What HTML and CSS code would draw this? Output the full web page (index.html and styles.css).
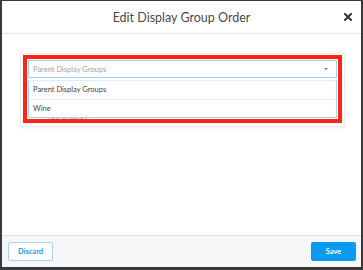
FILE: index.html
```html
<!DOCTYPE html>
<html lang="en">
<head>
  <meta charset="UTF-8" />
  <meta name="viewport" content="width=device-width, initial-scale=1.0"/>
  <title>Edit Display Group Order</title>
  <link rel="stylesheet" href="styles.css">
</head>
<body>
  <div class="modal">
    <div class="modal-header">
      <span></span>
      <h1 class="modal-title">Edit Display Group Order</h1>
      <button class="btn-close" aria-label="Close">
        <svg width="8" height="8" viewBox="0 0 8 8"><path d="M1 1 L7 7 M7 1 L1 7" stroke="#333" stroke-width="2" stroke-linecap="square"/></svg>
      </button>
    </div>

    <div class="modal-body">
      <div class="card">
        <span class="hidden-row">Top Display</span>
        <div class="highlight">
          <div class="select">
            <span class="placeholder">Parent Display Groups</span>
            <span class="caret"></span>
          </div>
          <ul class="menu">
            <li>Parent Display Groups</li>
            <li>Wine</li>
          </ul>
        </div>
      </div>
    </div>

    <div class="modal-footer">
      <button class="btn-outline">Discard</button>
      <button class="btn-azul">Save</button>
    </div>
  </div>
</body>
</html>
```

FILE: styles.css
```css
* { box-sizing: border-box; }

body {
  margin: 0;
  font-family: 'Lato', 'Open Sans', sans-serif;
  background: #3a3a3a;
  height: 270px;
  padding: 1px 2px 3px 2px;
}

.modal {
  background: #fff;
  height: 266px;
  display: flex;
  flex-direction: column;
}

.modal-header {
  height: 33px;
  border-bottom: 1px solid #e6e6e6;
  display: grid;
  grid-template-columns: 1fr auto 1fr;
  align-items: center;
}

.modal-title {
  margin: 0;
  font-size: 12.5px;
  font-weight: 400;
  color: #4a4a4a;
}

.btn-close {
  justify-self: end;
  margin-right: 9px;
  border: none;
  background: none;
  padding: 0;
  display: flex;
  cursor: pointer;
}

.modal-body {
  flex: 1;
  padding: 19px 16px 0 18px;
}

.card {
  position: relative;
  border: 1px solid #ececec;
  box-shadow: 0 1px 3px rgba(0, 0, 0, 0.06);
  height: 74px;
  padding: 1px 2px;
}

.highlight {
  position: relative;
  border: 4px solid #ff2515;
  padding: 1px;
}

.select {
  height: 18px;
  border: 1px solid #9fd2f3;
  background: #fff;
  display: flex;
  align-items: center;
  justify-content: space-between;
  padding: 0 8px 0 4px;
}

.placeholder {
  font-size: 7.5px;
  color: #a4a4a4;
}

.caret {
  width: 0;
  height: 0;
  border-left: 2px solid transparent;
  border-right: 2px solid transparent;
  border-top: 2px solid #2a8fd6;
}

.menu {
  list-style: none;
  margin: 2px 0 0 0;
  padding: 0;
  background: #fff;
  border: 1px solid #9fd2f3;
  border-top-color: #dfeef9;
}

.menu li {
  height: 18px;
  line-height: 18px;
  padding: 0 4px;
  font-size: 7.5px;
  color: #444;
}

.menu li + li {
  border-top: 1px solid #ececec;
}

.hidden-row {
  position: absolute;
  left: 26px;
  top: 57px;
  font-size: 8px;
  color: #9aa8b2;
}

.modal-footer {
  height: 32px;
  border-top: 1px solid #e2e2e2;
  background: #f6f7f9;
  display: flex;
  justify-content: space-between;
  align-items: center;
  padding: 0 5px 0 6px;
}

.btn-outline, .btn-azul {
  height: 19px;
  font-family: inherit;
  font-size: 7.5px;
  font-weight: 700;
  border-radius: 2px;
  cursor: pointer;
}

.btn-outline {
  width: 45px;
  background: #fff;
  color: #1a9bef;
  border: 1px solid #a6d6f6;
}

.btn-azul {
  width: 45px;
  background: #0a9bf0;
  color: #fff;
  border: none;
}
```
